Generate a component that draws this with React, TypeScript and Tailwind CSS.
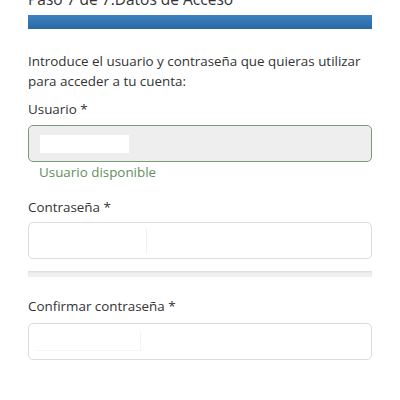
import React from "react";

export default function App() {
  return (
    <div className="w-[400px] h-[400px] overflow-hidden bg-white text-[#333] text-[13.4px] leading-[20px]" style={{ fontFamily: '"Open Sans", sans-serif' }}>
      <div className="px-[28px] mt-[-12px]">
        <h3 className="text-[15.5px] leading-[22px] text-[#333]">Paso 7 de 7.Datos de Acceso</h3>
        <div className="mt-[5px] h-[14px] w-full bg-[#f5f5f5] shadow-[inset_0_1px_2px_rgba(0,0,0,0.1)]">
          <div className="h-full w-full bg-gradient-to-b from-[#3d82c0] to-[#2a68a3]" />
        </div>
        <p className="mt-[22px]">Introduce el usuario y contraseña que quieras utilizar para acceder a tu cuenta:</p>
        <label className="block mt-[8px]">Usuario *</label>
        <div className="mt-[6px] h-[37px] rounded-[5px] border border-[#7a9a7a] bg-[#eeeeee] flex items-center px-[11px]">
          <div className="w-[89px] h-[18px] bg-white" />
        </div>
        <div className="mt-0 pl-[11px] text-[#5f8f5f]">Usuario disponible</div>
        <label className="block mt-[15px]">Contraseña *</label>
        <div className="mt-[5px] h-[37px] rounded-[5px] border border-[#dcdcdc] bg-white flex items-center px-[11px]">
          <div className="w-[107px] h-[26px] border-r border-[#f2f2f2]" />
        </div>
        <div className="mt-[12px] h-[6px] bg-[#f0f0f0] shadow-[inset_0_1px_2px_rgba(0,0,0,0.1)]" />
        <label className="block mt-[19px]">Confirmar contraseña *</label>
        <div className="mt-[7px] h-[37px] rounded-[5px] border border-[#dcdcdc] bg-white flex items-center px-[8px]">
          <div className="w-[104px] h-[19px] border-r border-b border-[#f4f4f4]" />
        </div>
      </div>
    </div>
  );
}
